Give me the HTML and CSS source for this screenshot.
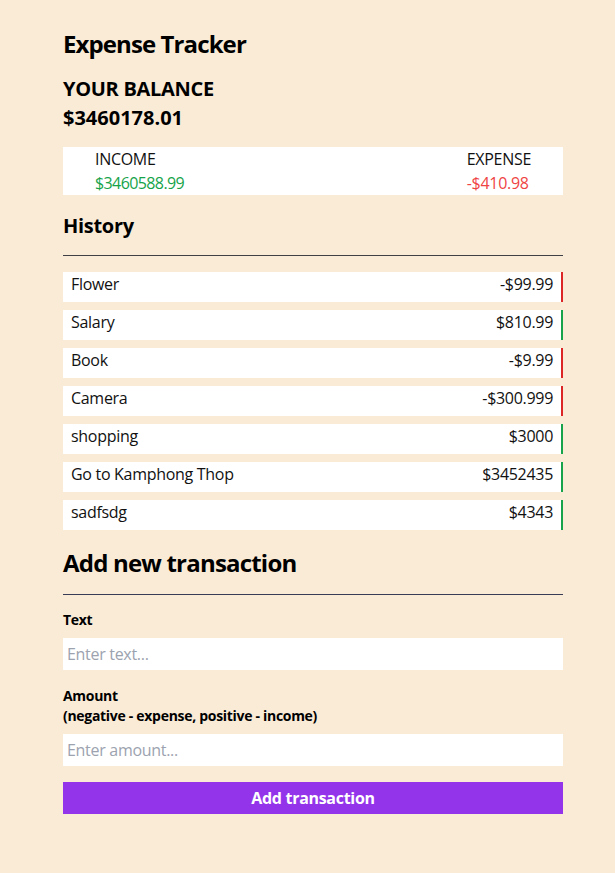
FILE: index.html
```html
<!DOCTYPE html>
<html lang="en">
<head>
<meta charset="utf-8">
<title>Expense Tracker</title>
<link rel="stylesheet" href="styles.css">
</head>
<body>
<main class="app">
  <h1 class="title">Expense Tracker</h1>
  <h2 class="balance-label">YOUR BALANCE</h2>
  <div class="balance">$3460178.01</div>

  <section class="summary">
    <div class="summary-col">
      <div class="summary-label">INCOME</div>
      <div class="money plus">$3460588.99</div>
    </div>
    <div class="summary-col">
      <div class="summary-label">EXPENSE</div>
      <div class="money minus">-$410.98</div>
    </div>
  </section>

  <h3 class="section-title">History</h3>
  <hr class="rule">
  <ul class="list">
    <li class="item neg"><span>Flower</span><span>-$99.99</span></li>
    <li class="item pos"><span>Salary</span><span>$810.99</span></li>
    <li class="item neg"><span>Book</span><span>-$9.99</span></li>
    <li class="item neg"><span>Camera</span><span>-$300.999</span></li>
    <li class="item pos"><span>shopping</span><span>$3000</span></li>
    <li class="item pos"><span>Go to Kamphong Thop</span><span>$3452435</span></li>
    <li class="item pos"><span>sadfsdg</span><span>$4343</span></li>
  </ul>

  <h3 class="section-title big">Add new transaction</h3>
  <hr class="rule rule-2">
  <form class="form">
    <label class="label" for="text">Text</label>
    <input class="input" id="text" type="text" placeholder="Enter text...">
    <label class="label label-2" for="amount">Amount<br>(negative - expense, positive - income)</label>
    <input class="input" id="amount" type="text" placeholder="Enter amount...">
    <button class="btn" type="button">Add transaction</button>
  </form>
</main>
</body>
</html>
```

FILE: styles.css
```css
* { box-sizing: border-box; }
html, body { margin: 0; padding: 0; }
body {
  background: #faebd7;
  font-family: "Open Sans", "Noto Sans", sans-serif;
  color: #000;
}
.app {
  width: 500px;
  margin-left: 63px;
  padding-top: 28px;
  padding-bottom: 40px;
}
.title {
  margin: 0;
  font-size: 24px;
  line-height: 32px;
  font-weight: 700;
  letter-spacing: -0.9px;
}
.balance-label {
  margin: 15px 0 0;
  font-size: 20px;
  line-height: 28px;
  font-weight: 700;
  letter-spacing: -0.3px;
}
.balance {
  font-size: 20px;
  line-height: 29px;
  font-weight: 700;
}
.summary {
  margin-top: 15px;
  background: #fff;
  display: flex;
  justify-content: space-between;
  padding: 0 32px;
  font-size: 16px;
  line-height: 24px;
  letter-spacing: -0.3px;
}
.summary-label { color: #111; }
.money.plus { color: #16a34a; letter-spacing: -0.6px; }
.money.minus { color: #ef4444; }
.section-title {
  margin: 17px 0 0;
  font-size: 20px;
  line-height: 28px;
  font-weight: 700;
  letter-spacing: -0.3px;
}
.section-title.big {
  font-size: 24px;
  line-height: 32px;
  letter-spacing: -0.8px;
}
.rule {
  margin: 15px 0 0;
  border: 0;
  height: 1px;
  background: #3f3f46;
}
.rule-2 { background: #383c55; }
.list {
  list-style: none;
  margin: 16px 0 0;
  padding: 0;
  display: flex;
  flex-direction: column;
  gap: 8px;
}
.item {
  display: flex;
  justify-content: space-between;
  background: #fff;
  height: 30px;
  padding: 0 8px;
  font-size: 16px;
  line-height: 24px;
  color: #111;
  letter-spacing: -0.3px;
  border-right: 2px solid transparent;
}
.item.neg { border-right-color: #dc2626; }
.item.pos { border-right-color: #16a34a; }
.form {
  display: flex;
  flex-direction: column;
  margin-top: 15px;
}
.label {
  font-size: 14px;
  line-height: 20px;
  font-weight: 700;
  letter-spacing: -0.3px;
}
.label-2 { margin-top: 16px; }
.input {
  margin-top: 8px;
  height: 32px;
  border: 0;
  outline: none;
  background: #fff;
  padding: 0 4px;
  font-family: inherit;
  font-size: 16px;
  letter-spacing: -0.3px;
  color: #111;
}
.input::placeholder { color: #9ca3af; }
.btn {
  margin-top: 16px;
  height: 32px;
  border: 0;
  background: #9333ea;
  color: #fff;
  font-family: inherit;
  font-size: 16px;
  font-weight: 700;
  letter-spacing: -0.3px;
  cursor: pointer;
}
```
